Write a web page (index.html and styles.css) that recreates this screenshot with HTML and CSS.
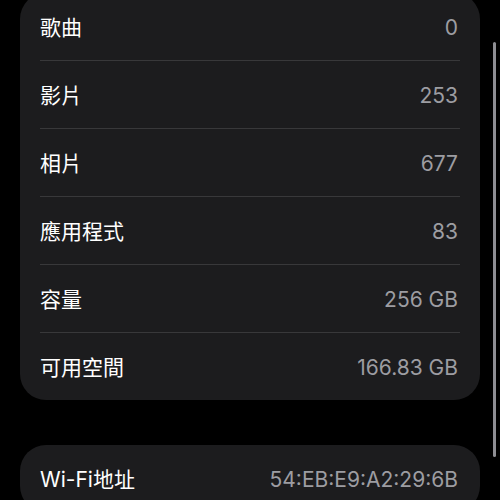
FILE: index.html
```html
<!DOCTYPE html>
<html lang="zh-Hant">
<head>
    <meta charset="UTF-8">
    <meta name="viewport" content="width=device-width, initial-scale=1.0">
    <title>關於本機</title>
    <link rel="stylesheet" href="styles.css">
</head>
<body>
    <div class="page">
        <div class="group first">
            <div class="row"><span class="label">歌曲</span><span class="value">0</span></div>
            <div class="row"><span class="label">影片</span><span class="value">253</span></div>
            <div class="row"><span class="label">相片</span><span class="value">677</span></div>
            <div class="row"><span class="label">應用程式</span><span class="value">83</span></div>
            <div class="row"><span class="label">容量</span><span class="value">256 GB</span></div>
            <div class="row"><span class="label">可用空間</span><span class="value">166.83 GB</span></div>
        </div>

        <div class="group">
            <div class="row"><span class="label">Wi-Fi地址</span><span class="value">54:EB:E9:A2:29:6B</span></div>
        </div>
    </div>

    <div class="scrollbar"></div>
</body>
</html>
```

FILE: styles.css
```css
html, body {
    margin: 0;
    padding: 0;
    background: #000;
    height: 100%;
    overflow: hidden;
}

body {
    font-family: Inter, "Noto Sans CJK TC", sans-serif;
    color: #fff;
}

.page {
    padding: 0 20px;
    display: flex;
    flex-direction: column;
    gap: 45px;
}

.group {
    background: #1c1c1e;
    border-radius: 26px;
}

.group.first {
    margin-top: -7px;
}

.row {
    height: 65px;
    margin: 0 20px;
    padding: 2px 2px 0 0;
    display: flex;
    align-items: center;
    justify-content: space-between;
    border-bottom: 1px solid #38383a;
    font-size: 21px;
    line-height: 26px;
}

.row:last-child {
    border-bottom: none;
}

.label {
    color: #fff;
}

.value {
    color: #9d9da2;
}

.scrollbar {
    position: absolute;
    top: 42px;
    left: 493px;
    width: 3px;
    height: 415px;
    border-radius: 2px;
    background: #8e8e93;
}
```
